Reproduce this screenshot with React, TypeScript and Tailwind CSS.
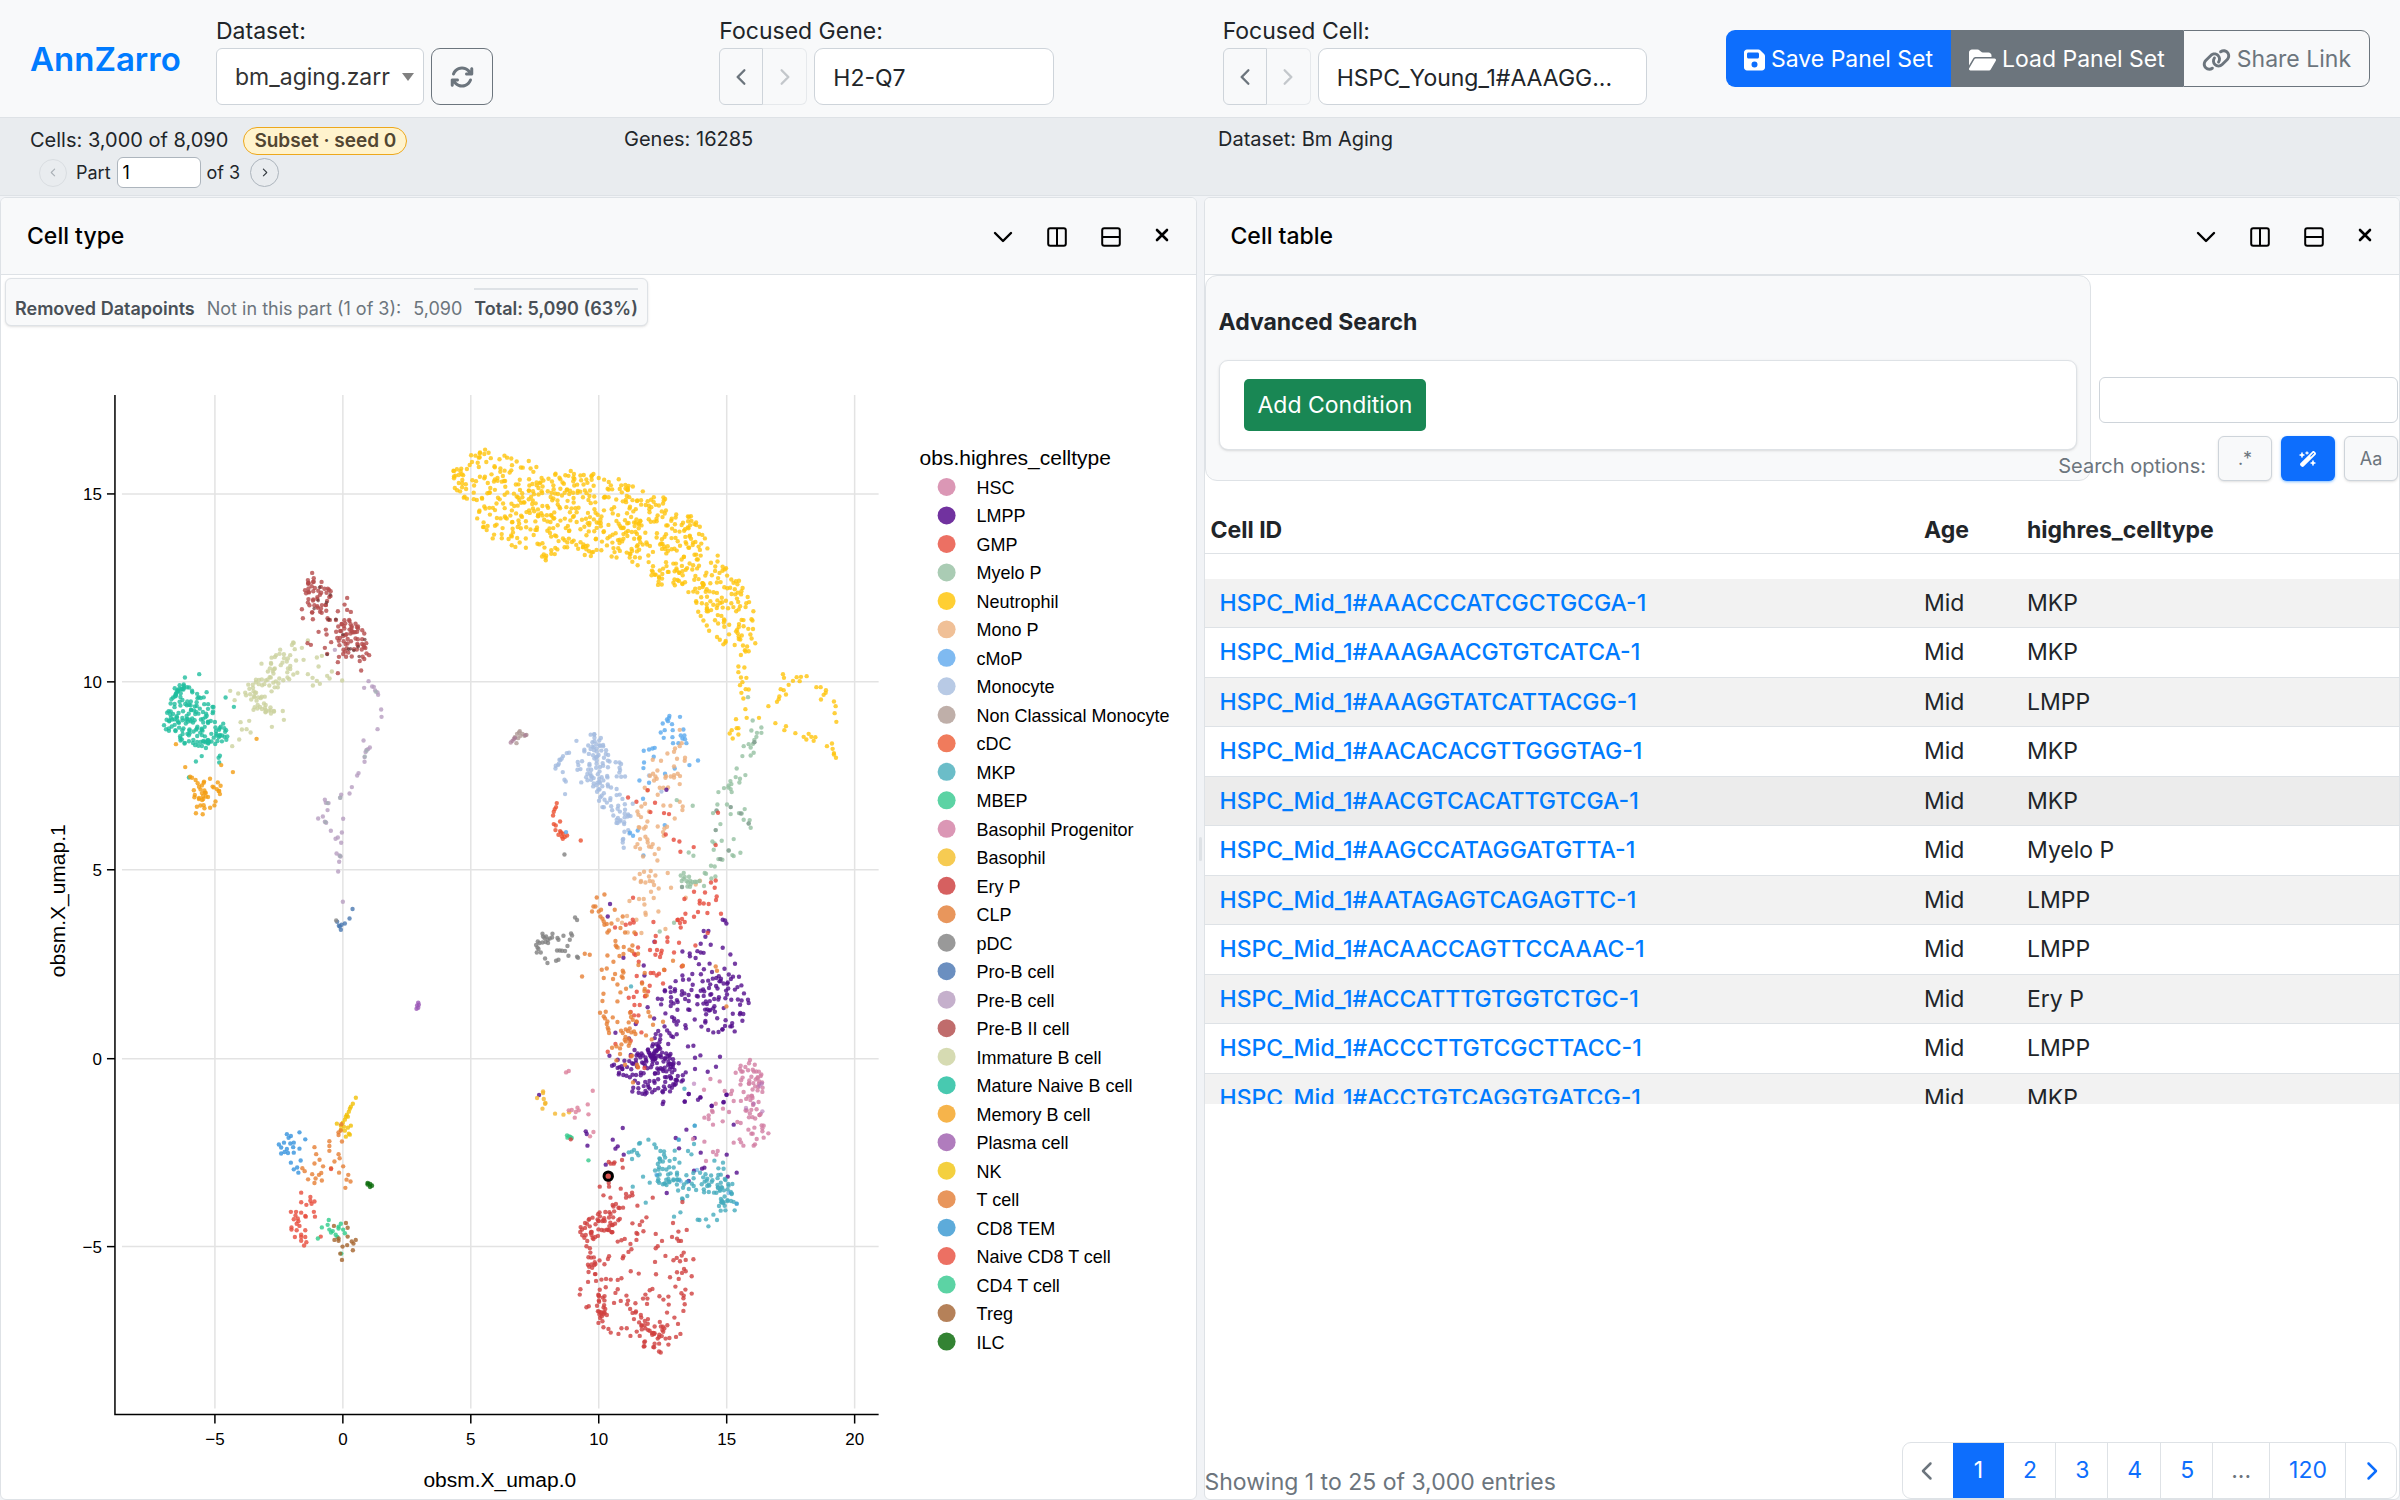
import React from 'react';
import {
  FaArrowsRotate,
  FaFloppyDisk,
  FaFolderOpen,
  FaLink,
  FaWandMagicSparkles,
  FaChevronLeft,
  FaChevronRight,
} from 'react-icons/fa6';
import { BsChevronLeft, BsChevronRight } from 'react-icons/bs';

/* ---------- scatter data ---------- */

type Frame = [number, number, number, number];
type Cluster = {
  color: string;
  frame: Frame;
  points?: number[];
  fills?: [number, number[]][];
  r?: number;
  alpha?: number;
};

const T = 1 / 3;
const PLOT: Frame = [0, 0, 1, 1];
const TAIL: Frame = [430, 430, T, T];
const WEST: Frame = [150, 560, T, T];
const EAST: Frame = [500, 680, T, T];
const SOUTH: Frame = [560, 1040, T, T];
const SW: Frame = [0, 920, 0.574, 0.3699];

const clusters: Cluster[] = [
  {
    color: '#ffc40c',
    frame: PLOT,
    fills: [[730, [453, 469, 468, 466, 472, 453, 485, 449, 505, 454, 530, 462, 548, 474, 570, 472, 592, 474, 618, 480, 640, 488, 665, 497, 670, 508, 692, 516, 704, 530, 712, 550, 728, 570, 737, 578, 748, 590, 755, 612, 756, 645, 748, 655, 738, 656, 722, 650, 712, 635, 700, 618, 695, 600, 685, 588, 660, 585, 645, 570, 628, 560, 600, 557, 588, 557, 565, 550, 548, 560, 535, 555, 525, 548, 505, 550, 490, 538, 478, 525, 474, 505, 465, 498, 453, 485]]],
  },
  {
    color: '#ffc40c',
    frame: TAIL,
    points: [926,710,944,713,926,727,934,743,950,744,938,757,931,766,948,778,957,779,935,789,941,806,947,838,951,864,919,868,988,864,906,901,900,911,926,895,921,895,926,914,909,926,1016,829,1037,880,1069,889,1064,901,1097,910,1122,921,1137,912,1130,929,1145,921,1157,922,1152,933,1192,949,1207,941,1209,957,1213,974,1219,984,1213,970,1042,816,1047,808,1049,800,1069,794,1053,778,1062,781,1077,765,1060,733,1063,744,1090,753,1101,742,1110,754,1114,741,1131,739,1160,772,1173,772,1189,781,1188,789,1182,795,1174,809,1213,815,1218,829,1215,850,1220,876,166,59,224,77,209,88,297,93,124,76,147,83,423,123,491,132,567,148,594,175,864,377,923,463,348,391,685,465,71,122,77,137,87,135,92,124,100,136,75,174,82,181,97,172,102,203,109,177],
  },
  {
    color: '#1fbd9e',
    frame: WEST,
    points: [105,353,148,343,170,397,227,413,252,441,138,605,208,608,210,588,117,653,206,594],
    fills: [[180, [70,385,85,365,125,385,130,400,170,400,190,435,200,460,208,485,232,495,235,545,215,545,180,560,180,590,155,590,140,560,110,560,78,530,40,515,40,500,55,430]]],
  },
  {
    color: '#f39c12',
    frame: WEST,
    points: [78,553,320,537,249,637,214,616,106,622,212,678,210,703,206,694],
    fills: [[38, [120,645,150,650,195,655,213,680,200,735,170,770,140,780,130,720,118,695]]],
  },
  {
    color: '#ccd29f',
    frame: WEST,
    points: [241,393,265,401,254,421,268,539,247,559,302,518,276,509,290,508,474,242,456,264,461,300,501,293,516,288,474,343,506,320,488,354,501,363,489,377,510,372,532,348,546,335,539,356,577,362,430,248,298,483,272,487,366,501,402,480],
    fills: [
      [78, [325,305,370,285,405,255,435,245,435,290,450,320,430,385,395,385,360,400,350,450,300,450,285,430,280,405,300,360,350,335]],
      [12, [285,430,350,440,410,450,400,470,340,460]],
    ],
  },
  {
    color: '#b44a4a',
    frame: WEST,
    points: [487,39,515,66,456,148,459,175,489,178,506,216,473,250,483,255,530,224,528,209,525,264,532,282,544,247,535,179,540,180,592,114,584,134,564,154,592,150,603,156,564,340,564,307,533,175,658,286,634,332],
    fills: [
      [46, [465,60,490,50,500,70,520,75,545,95,535,160,515,160,490,165,465,130]],
      [66, [555,175,600,180,640,200,650,240,655,285,635,325,600,290,560,300,560,240]],
    ],
  },
  {
    color: '#6c3434',
    frame: WEST,
    points: [509,82,541,105,505,122,493,146,537,179,558,178,579,224,602,267,625,261,645,239,628,290,612,272,532,284,530,128,596,268],
    r: 1.8,
    alpha: 0.7,
  },
  {
    color: '#b79ec0',
    frame: WEST,
    points: [656,364,643,384,667,380,672,381,676,392,683,398,685,405,694,449,695,471,683,508,641,542,660,563,650,570,655,568,647,577,644,592,644,606,626,640,622,647,606,682,599,701,574,705,571,714,525,720,528,729,536,730,533,751,519,770,505,776,580,777,525,786,529,789,543,813,576,818,564,833,557,837,574,849,560,881,569,887,572,890,568,906,565,935,579,1026,555,270],
  },
  { color: '#9fb3b0', frame: WEST, points: [678,396,650,573,645,590,571,714,533,730,527,787,571,889], alpha: 0.6 },
  { color: '#4a78b0', frame: WEST, points: [608,1048,599,1076,585,1091,573,1110,567,1098,570,1100,575,1095,562,1086] },
  { color: '#888888', frame: WEST, points: [559,1082] },
  { color: '#af9a96', frame: EAST, points: [60,154,52,162,68,162,80,165,74,168,45,172,55,175,50,190,58,158,62,168] },
  { color: '#a87a95', frame: EAST, points: [42,178,33,188,38,183,46,174,77,166], alpha: 0.7 },
  {
    color: '#eb5030',
    frame: EAST,
    points: [171,370,169,382,165,388,162,396,160,407,181,425,162,433,168,437,167,451,181,454,176,465,190,462,186,470,202,467,189,477,243,482,195,472,184,458],
  },
  {
    color: '#a4bce0',
    frame: EAST,
    points: [208,219,201,220,190,229,182,241,177,252,168,258,167,266,175,256,189,277,194,300,198,305,196,343,230,183,376,290,372,504,369,480,369,488,399,372,485,335,448,287,186,236,179,240],
    fills: [
      [84, [225,265,245,220,270,185,265,160,300,155,310,190,320,200,335,240,370,250,370,290,335,300,300,330,240,310]],
      [44, [295,320,340,310,365,330,380,370,395,400,390,470,370,480,355,440,330,400,285,365]],
    ],
  },
  {
    color: '#5aa9ee',
    frame: EAST,
    points: [509,108,541,111,502,119,505,124,489,131,517,133,495,151,483,158,551,149,519,151,492,174,518,172,543,167,554,167,556,178,520,190,536,190,560,190,465,204,458,206,448,209,432,213,462,231,433,248,431,265,525,266,569,256,595,242,419,302,448,309,496,282,430,357,495,436,400,468,414,452,391,459,199,457,431,527,548,176,508,114],
  },
  {
    color: '#ecae7a',
    frame: EAST,
    points: [540,150,546,190,540,199,526,206,503,221,523,216,459,240,484,243,532,237,556,234,555,243,523,260,473,272,460,282,451,288,467,290,471,297,499,289,497,294,513,290,523,286,534,282,541,289,523,293,463,302,540,313,435,324,443,332,480,324,491,324,505,323,474,345,436,372,425,380,413,395,416,405,424,412,448,395,491,377,512,378,540,366,549,380,548,391,525,416,443,425,438,441,433,446,419,444,417,442,474,440,494,446,502,441,490,457,492,468,437,471,421,478,413,493,407,502,443,479,444,488,448,500,459,493,455,502,477,507,421,507,430,530,465,523,473,542,453,574,433,576,420,583,404,596,467,587,504,580,448,590,424,604,423,607,437,608,450,604,459,605,463,616,477,626,454,636,514,624,418,658,432,658,462,655,389,664,434,674,437,699,438,705,476,695,382,709,410,720,354,720,367,729,497,748,355,804,601,603,588,614,558,654,384,758,425,760],
  },
  {
    color: '#95c0a1',
    frame: EAST,
    points: [745,52,759,122,785,143,755,152,772,159,785,159,770,171,764,180,764,187,760,192,747,193,732,199,753,203,762,219,753,227,728,229,711,266,737,286,708,292,721,297,719,308,692,304,695,313,687,317,686,323,673,325,693,328,696,337,656,337,531,361,579,378,653,374,682,374,693,382,735,388,651,393,640,400,693,403,718,400,726,401,732,420,750,421,747,431,753,444,662,433,648,451,702,478,666,483,638,485,645,491,642,510,687,512,698,526,702,529,722,519,567,518,581,528,656,538,662,538,668,540,634,558,645,560,615,580,619,582,635,596,647,590,552,580,543,587,555,592,568,591,546,604,560,604,571,603,578,607,586,606,573,613,547,622,563,620,571,621,613,619,551,597,523,729,480,755,599,604,590,607,565,608],
  },
  { color: '#7d8f8a', frame: EAST, points: [764,187,693,382,648,451,662,538,687,512,747,431,723,401,547,622,650,392], alpha: 0.6 },
  {
    color: '#530c8c',
    frame: EAST,
    points: [500,330,331,673,324,710,669,720,676,722,680,731,612,754,626,754,617,771,603,792,633,795,669,804,692,824,706,852,718,891,725,917,733,941,745,960,747,970,464,786,371,834,432,857,434,887,329,1128,337,1158,347,1059,408,1033,661,1131,602,1127,586,1134,649,1161,624,1176,586,1168,581,1098,565,1100,602,1253,595,1260,567,1243,636,1278,672,1267,681,1245,555,1266,491,1266,489,1273,118,1246,388,1076,548,815,357,1184,368,1168,728,1023,705,1055,354,1140],
    fills: [
      [132, [550,815,600,800,625,830,650,850,690,860,700,890,730,940,748,975,728,1010,680,1070,640,1060,590,1040,550,1070,500,1100,490,1040,445,1020,440,970,520,905,540,850]],
      [130, [460,1030,480,1050,490,1100,540,1150,560,1180,555,1220,520,1240,460,1250,390,1235,400,1200,350,1180,335,1160,385,1130,405,1110,450,1110]],
      [14, [440,1105,480,1080,485,1130,460,1150]],
      [12, [465,1160,515,1160,515,1195,465,1190]],
    ],
  },
  {
    color: '#530c8c',
    frame: SOUTH,
    points: [189,265,159,300,174,320,167,327,192,345,138,375,78,275,81,283,83,318,380,270,348,295,358,326,405,295,423,339,501,345,522,255,491,188,500,165,456,199,434,384,427,387,403,393,387,424,321,460,504,411,531,399,422,173,375,185,387,163],
  },
  {
    color: '#e6483a',
    frame: EAST,
    points: [385,353,410,366,444,331,466,369,452,397,493,400,508,403,498,464,522,480,539,485,542,516,582,502,648,496,655,399,400,654,634,608,648,602,645,624,583,636,616,638,554,658,651,650,649,661,600,663,600,671,627,673,612,671,664,702,623,700,595,697,583,711,557,702,535,720,547,718,533,721,555,727,541,730,543,743,461,727,399,720,402,728,391,731,378,735,346,743,408,763,468,769,503,773,503,786,466,787,538,789,587,797,624,760,451,811,472,811,486,813,484,821,467,825,523,818,481,832,403,822,415,803,407,826,417,846,546,860,549,858,494,871,478,882,471,887,453,880,461,880,411,889,427,908,450,918,490,911,445,935,411,936,387,954,402,952,436,950,404,976,420,976,437,948,393,997,403,1007,416,1007,411,1027,425,1058,393,1083,347,1093,324,1116,393,1130,414,1162,434,1165],
  },
  {
    color: '#e67e33',
    frame: EAST,
    points: [314,644,291,653,281,680,287,680,277,695,297,695,304,690,345,690,302,710,308,717,312,725,314,735,335,731,321,733,328,752,323,758,362,745,369,710,376,758,347,784,348,797,351,802,404,758,372,802,398,797,389,810,397,814,415,822,371,823,359,829,323,827,341,846,255,822,270,825,247,890,416,856,435,880,369,873,371,878,366,890,369,894,346,883,321,866,306,870,312,895,353,914,340,898,311,942,379,927,362,938,353,965,308,964,434,934,427,911,435,928,441,947,301,999,318,996,312,1010,316,1016,323,1025,321,1033,324,1044,326,1050,328,1060,339,1013,353,1027,391,999,394,1012,399,1020,387,1028,410,1025,364,1053,378,1049,390,1046,403,1055,395,1058,407,1063,369,1060,377,1072,386,1077,378,1085,390,1090,387,1098,365,1094,350,1100,337,1104,361,1106,361,1123,397,1128,439,1067,456,1079,460,1035,446,997,451,1010,490,1026,350,1142,376,1155,412,1155,415,1163,400,1208,520,843,549,858,648,860,652,873,680,980,493,870,385,1054,375,1080],
  },
  {
    color: '#7f7f7f',
    frame: EAST,
    points: [226,713,232,721,128,762,139,770,158,762,130,770,134,775,157,773,150,776,144,780,173,775,191,768,176,780,214,761,217,767,210,780,114,785,119,790,109,796,113,803,128,788,137,787,145,790,116,808,111,818,123,818,203,799,196,814,187,813,180,812,172,812,206,828,232,831,235,834,176,840,169,843,136,836,143,850,194,524],
  },
  { color: '#f4b72e', frame: EAST, points: [130,1235,130,1240,112,1255,132,1258,136,1272,128,1287,166,1302,191,1305,208,1298,137,1270] },
  {
    color: '#d27da2',
    frame: SOUTH,
    points: [571,61,543,78,528,99,452,118,480,125,433,150,495,154,517,153,514,163,522,184,468,192,490,207,457,213,459,217,447,227,434,234,447,238,460,255,508,217,489,245,533,247,543,250,568,233,606,257,612,258,566,270,584,264,575,282,626,281,612,294,608,275,591,298,522,309,540,299,544,308,551,318,582,318,586,314,434,306,460,337,474,334,470,345,439,364,400,298,608,266,579,282],
    fills: [[54, [540,75,570,65,600,80,615,150,600,190,610,220,600,240,570,240,550,210,535,190,540,130]]],
  },
  { color: '#b070b4', frame: SOUTH, points: [599,138,606,132,559,205,582,192,608,215,403,132], alpha: 0.6 },
  { color: '#dc7f9b', frame: SOUTH, points: [19,98,27,94,99,153,84,194,86,224,53,204,57,212,36,211,48,217,45,234,101,277,91,290,27,212] },
  { color: '#36c98c', frame: SOUTH, points: [22,287,23,294,32,292,36,295,86,362,28,290] },
  {
    color: '#45abbd',
    frame: SOUTH,
    points: [238,312,241,310,266,300,284,314,289,324,223,331,207,338,217,358,236,347,232,340,216,336,302,334,313,335,313,345,345,333,357,300,385,334,395,344,403,313,405,258,374,147,219,441,258,489,250,411,270,429,359,369,299,356,301,358,464,363,490,369,531,492,525,512,497,512,461,525,472,541,446,560,439,539,419,541,414,540,362,518,343,531,478,499,483,513,345,358,518,433,516,461],
    fills: [[100, [285,350,340,355,345,390,400,395,460,405,490,370,497,400,515,440,525,490,495,510,475,470,430,470,400,450,380,500,345,480,340,430,300,450,280,400]]],
  },
  { color: '#45abbd', frame: EAST, points: [394,920] },
  { color: '#3498db', frame: SOUTH, points: [405,258,357,300,290,405,412,391,507,460,531,492,363,425,385,425], alpha: 0.5 },
  {
    color: '#d0403e',
    frame: SOUTH,
    points: [147,430,148,441,120,441,147,367,153,372,162,372,187,361,189,384,164,368,131,467,152,474,183,447,199,463,217,459,218,467,199,474,209,470,233,498,279,474,260,533,218,551,247,545,240,556,251,575,230,580,233,583,230,601,288,583,307,604,294,620,288,626,317,649,286,667,289,704,340,550,356,576,381,571,337,592,352,597,364,604,357,604,372,639,366,648,351,655,341,662,361,665,378,661,401,659,373,688,378,695,352,698,367,700,396,710,357,718,331,713,347,741,377,750,365,761,372,768,371,776,396,762,375,794,371,814,326,771,327,795,299,770,311,780,322,819,344,834,355,853,362,883,349,892,213,695,237,702,212,613,215,629,195,598,185,602,174,606,191,650,206,637,185,716,174,721,153,720,139,718,125,720,109,724,85,727,138,743,174,749,167,760,62,749,60,765,80,803,87,800,183,784,163,790,200,768,205,783,227,791,257,765,270,752,278,748,263,777,250,777,262,793,116,850,128,845,131,863,146,868,153,879,176,883,185,866,201,866,212,889,231,876,240,889,303,939,298,936,326,915,368,487,33,299,189,656,105,668,107,673,148,650],
    fills: [
      [62, [85,540,105,520,135,515,165,490,190,500,195,530,160,580,125,590,80,620,60,595,60,560]],
      [24, [120,745,135,770,145,830,120,850,108,800]],
      [46, [200,790,240,815,280,850,320,840,330,895,300,930,240,920,255,880,200,830]],
      [16, [75,620,150,620,150,650,120,715,85,700,72,660]],
    ],
  },
  { color: '#f1bf05', frame: PLOT, points: [356,1098,353,1104,350,1109,347,1115,345,1120,337,1124,351,1126,344,1127,341,1130,349,1134,346,1137,350,1135,349,1112,348,1117,343,1123,341,1126,345,1131,348,1128,351,1107,346,1117] },
  { color: '#e67e33', frame: SW, points: [595,553,590,582,596,600,574,599,574,612,574,625,548,615,551,634,590,634,592,645,583,654,557,649,548,659,563,667,598,667,591,684,527,672,531,680,537,702,544,688,556,690,560,685,561,705,548,712,607,690,611,708,604,703,602,725,550,700,577,672,594,570,590,575] },
  { color: '#3492dd', frame: SW, points: [500,580,507,585,522,575,532,594,495,603,506,605,486,608,490,616,500,620,512,603,511,615,522,619,490,632,502,631,512,630,524,651,507,657,518,670,512,675,520,684,503,590,496,628] },
  { color: '#e74c3c', frame: SW, points: [525,738,541,750,525,764,534,771,541,760,548,762,543,768,507,790,516,790,525,792,533,803,547,790,549,803,532,801,512,810,520,815,508,832,517,822,522,828,508,838,517,840,532,840,525,852,514,858,525,858,532,858,525,868,534,872,530,881,559,857,577,674,515,800,519,808] },
  { color: '#2ecc8a', frame: SW, points: [573,812,571,825,561,832,574,838,590,830,594,822,580,842,585,852,598,838,588,858,601,848,554,862,577,846,595,903,590,835] },
  { color: '#a4632c', frame: SW, points: [603,820,606,833,606,857,582,828,583,866,590,862,613,870,620,866,605,880,597,884,615,894,593,903,596,920,590,868,616,876] },
  { color: '#0c6c0c', frame: SW, points: [641,712,645,715,645,722,641,716,648,719], r: 2.4 },
  { color: '#9b59b6', frame: SW, points: [729,224,727,232,726,241,729,238,730,230] },
];

function inside(x: number, y: number, p: number[]) {
  let hit = false;
  for (let i = 0, j = p.length - 2; i < p.length; j = i, i += 2) {
    if (p[i + 1] > y !== p[j + 1] > y && x < ((p[j] - p[i]) * (y - p[i + 1])) / (p[j + 1] - p[i + 1]) + p[i]) hit = !hit;
  }
  return hit;
}

/* Deterministic scatter of n points over a polygon, loosely spaced. */
function scatter(n: number, poly: number[], gap: number, seed: number) {
  let s = seed;
  const rnd = () => {
    s = (s * 1664525 + 1013904223) % 4294967296;
    return s / 4294967296;
  };
  const xs = poly.filter((_, i) => i % 2 === 0);
  const ys = poly.filter((_, i) => i % 2 === 1);
  const x0 = Math.min(...xs);
  const y0 = Math.min(...ys);
  const w = Math.max(...xs) - x0;
  const h = Math.max(...ys) - y0;
  const out: number[] = [];
  while (out.length < n * 2) {
    for (let tries = 0; tries < 400; tries++) {
      const x = x0 + rnd() * w;
      const y = y0 + rnd() * h;
      if (!inside(x, y, poly)) continue;
      let close = false;
      for (let i = 0; i < out.length && !close; i += 2) close = Math.hypot(out[i] - x, out[i + 1] - y) < gap;
      if (close && rnd() < 0.4) continue;
      out.push(x, y);
      break;
    }
  }
  return out;
}

const dots = clusters.map((c, ci) => {
  const [ox, oy, sx, sy] = c.frame;
  const raw = [...(c.points ?? [])];
  (c.fills ?? []).forEach(([n, poly], fi) => raw.push(...scatter(n, poly, 3 / sx, 97 + ci * 31 + fi * 7)));
  const list: [number, number][] = [];
  for (let i = 0; i < raw.length; i += 2) list.push([ox + raw[i] * sx, oy + raw[i + 1] * sy]);
  return { color: c.color, r: c.r ?? 2.2, alpha: c.alpha ?? 0.8, list };
});

const legend: [string, string][] = [
  ['HSC', '#db97b5'],
  ['LMPP', '#71329f'],
  ['GMP', '#ec7063'],
  ['Myelo P', '#aaccb4'],
  ['Neutrophil', '#ffcf33'],
  ['Mono P', '#f0c097'],
  ['cMoP', '#7fbaf1'],
  ['Monocyte', '#b8cae5'],
  ['Non Classical Monocyte', '#bfafa9'],
  ['cDC', '#f07b5c'],
  ['MKP', '#6bbdc8'],
  ['MBEP', '#5cd3a4'],
  ['Basophil Progenitor', '#db97b5'],
  ['Basophil', '#f6cb52'],
  ['Ery P', '#d66060'],
  ['CLP', '#e8965c'],
  ['pDC', '#999999'],
  ['Pro-B cell', '#6b8fc0'],
  ['Pre-B cell', '#c5b0cc'],
  ['Pre-B II cell', '#c06c6c'],
  ['Immature B cell', '#d6dbb2'],
  ['Mature Naive B cell', '#48c9b0'],
  ['Memory B cell', '#f6b44b'],
  ['Plasma cell', '#b07cbd'],
  ['NK', '#f4d03f'],
  ['T cell', '#e8965c'],
  ['CD8 TEM', '#5dabda'],
  ['Naive CD8 T cell', '#ec7063'],
  ['CD4 T cell', '#5cd3a4'],
  ['Treg', '#b58159'],
  ['ILC', '#338333'],
];

const xTicks = [-5, 0, 5, 10, 15, 20].map((v) => ({ v, p: Math.round(342.6 + v * 25.6) }));
const yTicks = [15, 10, 5, 0, -5].map((v) => ({ v, p: Math.round(1058.5 - v * 37.64) }));
const label = (v: number) => String(v).replace('-', '−');

function UmapPlot() {
  return (
    <svg
      viewBox="1 330 1195 1168"
      preserveAspectRatio="xMinYMin meet"
      className="block min-h-0 w-full flex-1 font-['Liberation_Sans',sans-serif]"
      role="img"
      aria-label="UMAP scatter plot coloured by cell type"
    >
      <g stroke="#e3e3e3" strokeWidth="1.5">
        {xTicks.map((t) => (
          <line key={t.v} x1={t.p} x2={t.p} y1="395" y2="1409" />
        ))}
        {yTicks.map((t) => (
          <line key={t.v} x1="122" x2="879" y1={t.p} y2={t.p} />
        ))}
      </g>
      {dots.map((g, i) => (
        <g key={i} fill={g.color} fillOpacity={g.alpha}>
          {g.list.map(([x, y], k) => (
            <circle key={k} cx={x.toFixed(1)} cy={y.toFixed(1)} r={g.r} />
          ))}
        </g>
      ))}
      <circle cx="608.5" cy="1176.5" r="4.2" fill="#d9534f" stroke="#000" strokeWidth="3" />
      <g stroke="#000" strokeWidth="1.5" fill="none">
        <path d="M115 395V1415H879" />
        {xTicks.map((t) => (
          <line key={t.v} x1={t.p} x2={t.p} y1="1415" y2="1424" />
        ))}
        {yTicks.map((t) => (
          <line key={t.v} x1="107" x2="115" y1={t.p} y2={t.p} />
        ))}
      </g>
      <g fontSize="17">
        {xTicks.map((t) => (
          <text key={t.v} x={t.p} y="1445" textAnchor="middle">
            {label(t.v)}
          </text>
        ))}
        {yTicks.map((t) => (
          <text key={t.v} x="102" y={t.p + 6} textAnchor="end">
            {label(t.v)}
          </text>
        ))}
      </g>
      <g fontSize="21">
        <text x="500" y="1487" textAnchor="middle">
          obsm.X_umap.0
        </text>
        <text transform="translate(65 901) rotate(-90)" textAnchor="middle">
          obsm.X_umap.1
        </text>
        <text x="920" y="465">
          obs.highres_celltype
        </text>
      </g>
      <g fontSize="18">
        {legend.map(([name, color], i) => (
          <g key={name}>
            <circle cx="947" cy={487 + i * 28.5} r="9" fill={color} />
            <text x="977" y={494 + i * 28.5}>
              {name}
            </text>
          </g>
        ))}
      </g>
    </svg>
  );
}

/* ---------- chrome ---------- */

function StepButtons({ what }: { what: string }) {
  return (
    <div className="flex text-[#6c757d]">
      <button aria-label={`Previous ${what}`} className="flex h-[57px] w-[44px] items-center justify-center rounded-l-[6px] border border-[#ced4da]">
        <BsChevronLeft className="size-[18px]" strokeWidth={1} />
      </button>
      <button
        disabled
        aria-label={`Next ${what}`}
        className="flex h-[57px] w-[44px] items-center justify-center rounded-r-[6px] border border-l-0 border-[#e6e9ec] text-[#c3c7cb]"
      >
        <BsChevronRight className="size-[18px]" strokeWidth={1} />
      </button>
    </div>
  );
}

function Header() {
  return (
    <header className="flex items-start border-b border-[#dee2e6] bg-[#f8f9fa] px-[30px] py-3">
      <h1 className="w-[186px] shrink-0 pt-[23px] text-[33px] leading-[48px] font-semibold text-[#007bff]">AnnZarro</h1>
      <div className="flex-1">
        <label htmlFor="dataset" className="block pt-[2px] leading-[34px]">
          Dataset:
        </label>
        <div className="flex gap-[7px]">
          <div className="relative">
            <select id="dataset" className="h-[57px] w-[208px] appearance-none rounded-[6px] border border-[#ced4da] bg-white pt-[2px] pl-[18px] text-[#333]">
              <option>bm_aging.zarr</option>
            </select>
            <svg viewBox="0 0 12 8" className="pointer-events-none absolute top-[25px] right-[10px] h-[8px] w-[12px] fill-[#808080]">
              <path d="M0 0H12L6 8Z" />
            </svg>
          </div>
          <button aria-label="Refresh datasets" className="flex h-[57px] w-[62px] items-center justify-center rounded-[9px] border border-[#6c757d] text-[#6c757d]">
            <FaArrowsRotate className="size-6" />
          </button>
        </div>
      </div>
      <div className="flex-1">
        <label htmlFor="gene" className="block pt-[2px] leading-[34px]">
          Focused Gene:
        </label>
        <div className="flex gap-[7px]">
          <StepButtons what="gene" />
          <input id="gene" defaultValue="H2-Q7" className="h-[57px] w-[240px] rounded-[9px] border border-[#ced4da] bg-white px-[18px] pt-[2px]" />
        </div>
      </div>
      <div className="flex-1">
        <label htmlFor="cell" className="block pt-[2px] leading-[34px]">
          Focused Cell:
        </label>
        <div className="flex gap-[7px]">
          <StepButtons what="cell" />
          <input id="cell" defaultValue="HSPC_Young_1#AAAGG..." className="h-[57px] w-[329px] rounded-[9px] border border-[#ced4da] bg-white px-[18px] pt-[2px]" />
        </div>
      </div>
      <div className="mt-[18px] flex h-[57px]">
        <button className="flex items-center gap-[6px] rounded-l-[9px] bg-[#0d6efd] px-[18px] pt-[2px] text-white">
          <FaFloppyDisk className="h-6 w-[21px]" />
          Save Panel Set
        </button>
        <button className="flex items-center gap-[6px] bg-[#6c757d] px-[18px] pt-[2px] text-white">
          <FaFolderOpen className="h-6 w-[27px]" />
          Load Panel Set
        </button>
        <button className="flex items-center gap-[6px] rounded-r-[9px] border border-[#6c757d] px-[18px] pt-[2px] text-[#6c757d]">
          <FaLink className="h-6 w-[29px]" />
          Share Link
        </button>
      </div>
    </header>
  );
}

function StatusBar() {
  return (
    <section className="grid grid-cols-4 gap-9 border-b border-[#dee2e6] bg-[#e9ecef] px-[30px] pt-[6px] pb-[7px] text-[20px] leading-[30px]">
      <div>
        <div className="flex items-center">
          <span>Cells: 3,000 of 8,090</span>
          <span className="mt-[3px] ml-[15px] h-[28px] rounded-full border border-[#eda81c] bg-[#fff3cd] px-[10px] text-[19px] leading-[25px] font-semibold text-[#524632]">
            Subset · seed 0
          </span>
        </div>
        <div className="mt-[2px] flex items-center pl-[9px] text-[18px]">
          <button disabled aria-label="Previous part" className="flex size-7 items-center justify-center rounded-full border border-[#d9dde1] text-[#a9afb5]">
            <FaChevronLeft className="size-[9px]" />
          </button>
          <label htmlFor="part" className="ml-[9px]">
            Part
          </label>
          <input id="part" type="text" defaultValue="1" className="ml-[6px] h-[31px] w-[84px] rounded-[6px] border border-[#adb5bd] bg-white px-[5px] text-black" />
          <span className="ml-[6px]">of 3</span>
          <button aria-label="Next part" className="ml-[10px] flex size-[29px] items-center justify-center rounded-full border border-[#adb5bd] text-[#343a40]">
            <FaChevronRight className="size-[9px]" />
          </button>
        </div>
      </div>
      <div>Genes: 16285</div>
      <div>Dataset: Bm Aging</div>
    </section>
  );
}

function Panel({ title, children }: { title: string; children: React.ReactNode }) {
  return (
    <section className="flex min-w-0 flex-1 flex-col overflow-hidden rounded-[6px] border border-[#dee2e6] bg-white">
      <div className="flex h-[77px] shrink-0 items-center border-b border-[#dee2e6] bg-[#f8f9fa] pt-px pr-[10px] pl-[26px] text-black">
        <h2 className="flex-1 font-medium">{title}</h2>
        <button aria-label="Collapse" className="flex h-10 w-[54px] items-center justify-center">
          <svg viewBox="0 0 20 12" className="h-3 w-5 fill-none stroke-current stroke-[2.4]" strokeLinecap="round" strokeLinejoin="round">
            <path d="M2 2L10 10L18 2" />
          </svg>
        </button>
        <button aria-label="Split vertically" className="flex h-10 w-[54px] items-center justify-center">
          <svg viewBox="0 0 20 20" className="size-5 fill-none stroke-current stroke-2">
            <rect x="1.2" y="1.2" width="17.6" height="17.6" rx="2" />
            <path d="M10 1V19" />
          </svg>
        </button>
        <button aria-label="Split horizontally" className="flex h-10 w-[54px] items-center justify-center">
          <svg viewBox="0 0 20 20" className="size-5 fill-none stroke-current stroke-2">
            <rect x="1.2" y="1.2" width="17.6" height="17.6" rx="2" />
            <path d="M1 10H19" />
          </svg>
        </button>
        <button aria-label="Close" className="flex h-10 w-12 items-center justify-center pb-[3px]">
          <svg viewBox="0 0 14 14" className="size-[14px] fill-none stroke-current stroke-[2.6]" strokeLinecap="round">
            <path d="M2 2L12 12M12 2L2 12" />
          </svg>
        </button>
      </div>
      {children}
    </section>
  );
}

function CellTypePanel() {
  return (
    <Panel title="Cell type">
      <div className="mt-[3px] mb-1 ml-1 flex h-12 items-end gap-3 self-start rounded-[6px] border border-[#dee2e6] bg-[#f8f9fa] px-[9px] pb-[3px] text-[18px] leading-[26px] text-[#6c757d] shadow-sm">
        <strong className="font-semibold text-[#495057]">Removed Datapoints</strong>
        <span>Not in this part (1 of 3):</span>
        <span>5,090</span>
        <strong className="border-t-2 border-[#dee2e6] pt-[6px] font-semibold text-[#495057]">Total: 5,090 (63%)</strong>
      </div>
      <UmapPlot />
    </Panel>
  );
}

const rows: [string, string, string][] = [
  ['HSPC_Mid_1#AAACCCATCGCTGCGA-1', 'Mid', 'MKP'],
  ['HSPC_Mid_1#AAAGAACGTGTCATCA-1', 'Mid', 'MKP'],
  ['HSPC_Mid_1#AAAGGTATCATTACGG-1', 'Mid', 'LMPP'],
  ['HSPC_Mid_1#AACACACGTTGGGTAG-1', 'Mid', 'MKP'],
  ['HSPC_Mid_1#AACGTCACATTGTCGA-1', 'Mid', 'MKP'],
  ['HSPC_Mid_1#AAGCCATAGGATGTTA-1', 'Mid', 'Myelo P'],
  ['HSPC_Mid_1#AATAGAGTCAGAGTTC-1', 'Mid', 'LMPP'],
  ['HSPC_Mid_1#ACAACCAGTTCCAAAC-1', 'Mid', 'LMPP'],
  ['HSPC_Mid_1#ACCATTTGTGGTCTGC-1', 'Mid', 'Ery P'],
  ['HSPC_Mid_1#ACCCTTGTCGCTTACC-1', 'Mid', 'LMPP'],
  ['HSPC_Mid_1#ACCTGTCAGGTGATCG-1', 'Mid', 'MKP'],
];
const HOVERED = 4;

function Pagination() {
  const cell = 'flex items-center border-r border-[#dee2e6] pr-[18px] pl-[19px] text-[#0d6efd]';
  return (
    <nav aria-label="Table pages" className="flex h-[57px] overflow-hidden rounded-[9px] border border-[#dee2e6]">
      <button disabled aria-label="Previous page" className="flex items-center px-[18px] text-[#6c757d]">
        <FaChevronLeft className="h-5 w-[14px]" />
      </button>
      <button aria-current="page" className="flex items-center bg-[#0d6efd] px-[21px] text-white">
        1
      </button>
      {['2', '3', '4', '5'].map((n) => (
        <button key={n} className={cell}>
          {n}
        </button>
      ))}
      <span className="flex items-center border-r border-[#dee2e6] px-[18px] text-[#6c757d]">...</span>
      <button className={cell}>120</button>
      <button aria-label="Next page" className="flex items-center px-[18px] text-[#0d6efd]">
        <FaChevronRight className="h-5 w-[14px]" />
      </button>
    </nav>
  );
}

function CellTablePanel() {
  return (
    <Panel title="Cell table">
      <div className="flex gap-2 pr-px">
        <div className="flex-1 rounded-[12px] border border-[#dee2e6] bg-[#f8f9fa] px-[13px] pt-[28px] pb-[30px]">
          <h3 className="leading-9 font-bold">Advanced Search</h3>
          <div className="mt-5 rounded-[9px] border border-[#dee2e6] bg-white px-6 py-[18px] shadow-sm">
            <button className="block h-[52px] rounded-[5px] bg-[#198754] px-[14px] text-white">Add Condition</button>
          </div>
        </div>
        <div className="flex w-[299px] shrink-0 flex-col justify-end gap-[13px]">
          <input aria-label="Search table" className="h-[46px] w-full rounded-[6px] border border-[#ced4da] px-3" />
          <div className="flex items-end justify-end gap-[9px] text-[20px]">
            <span className="mr-[3px] shrink-0 leading-[30px] text-[#6c757d]">Search options:</span>
            <button aria-label="Regular expression" className="h-[45px] w-[54px] shrink-0 rounded-[6px] border border-[#ced4da] bg-[#f8f9fa] text-[18px] text-[#6c757d] shadow-sm">
              .*
            </button>
            <button aria-label="Smart search" className="flex h-[45px] w-[54px] shrink-0 items-center justify-center rounded-[6px] bg-[#0d6efd] text-white shadow-sm shadow-blue-300">
              <FaWandMagicSparkles className="size-[18px]" />
            </button>
            <button aria-label="Match case" className="h-[45px] w-[54px] shrink-0 rounded-[6px] border border-[#ced4da] bg-[#f8f9fa] text-[18px] text-[#6c757d] shadow-sm">
              Aa
            </button>
          </div>
        </div>
      </div>
      <div className="h-[623px] shrink-0 overflow-hidden">
        <table className="w-full table-fixed text-left">
          <colgroup>
            <col />
            <col className="w-[103px]" />
            <col className="w-[378px]" />
          </colgroup>
          <thead>
            <tr className="border-b border-[#dee2e6] leading-9">
              <th className="px-[6px] pt-[31px] pb-[5px] font-bold">Cell ID</th>
              <th className="px-[6px] pt-[31px] pb-[5px] font-bold">Age</th>
              <th className="px-[6px] pt-[31px] pb-[5px] font-bold">highres_celltype</th>
            </tr>
          </thead>
          <tbody className="leading-normal">
            <tr aria-hidden="true">
              <td colSpan={3} className="h-[25px]" />
            </tr>
            {rows.map(([id, age, type], i) => (
              <tr
                key={id}
                className={`border-b border-[#dee2e6] ${i === HOVERED ? 'bg-[#ececec]' : i % 2 === 0 ? 'bg-[#f2f2f2]' : 'bg-white'}`}
              >
                <td className="py-[7px] pl-[15px]">
                  <a href="#cell" className="font-medium text-[#007bff]">
                    {id}
                  </a>
                </td>
                <td className="px-[6px] py-[7px]">{age}</td>
                <td className="px-[6px] py-[7px]">{type}</td>
              </tr>
            ))}
          </tbody>
        </table>
      </div>
      <div className="mt-auto flex items-end justify-between pr-[2px]">
        <p className="leading-[34px] text-[#6c757d]">Showing 1 to 25 of 3,000 entries</p>
        <Pagination />
      </div>
    </Panel>
  );
}

export default function App() {
  return (
    <div className="flex min-h-screen flex-col bg-white font-['Inter',sans-serif] text-[23px] leading-normal text-[#212529]">
      <Header />
      <StatusBar />
      <main className="flex flex-1 bg-[#f1f3f6] pt-px">
        <CellTypePanel />
        <div role="separator" aria-orientation="vertical" className="flex w-[7px] shrink-0 items-center justify-center">
          <div className="h-6 w-[3px] rounded bg-[#dee2e6]" />
        </div>
        <CellTablePanel />
      </main>
    </div>
  );
}
